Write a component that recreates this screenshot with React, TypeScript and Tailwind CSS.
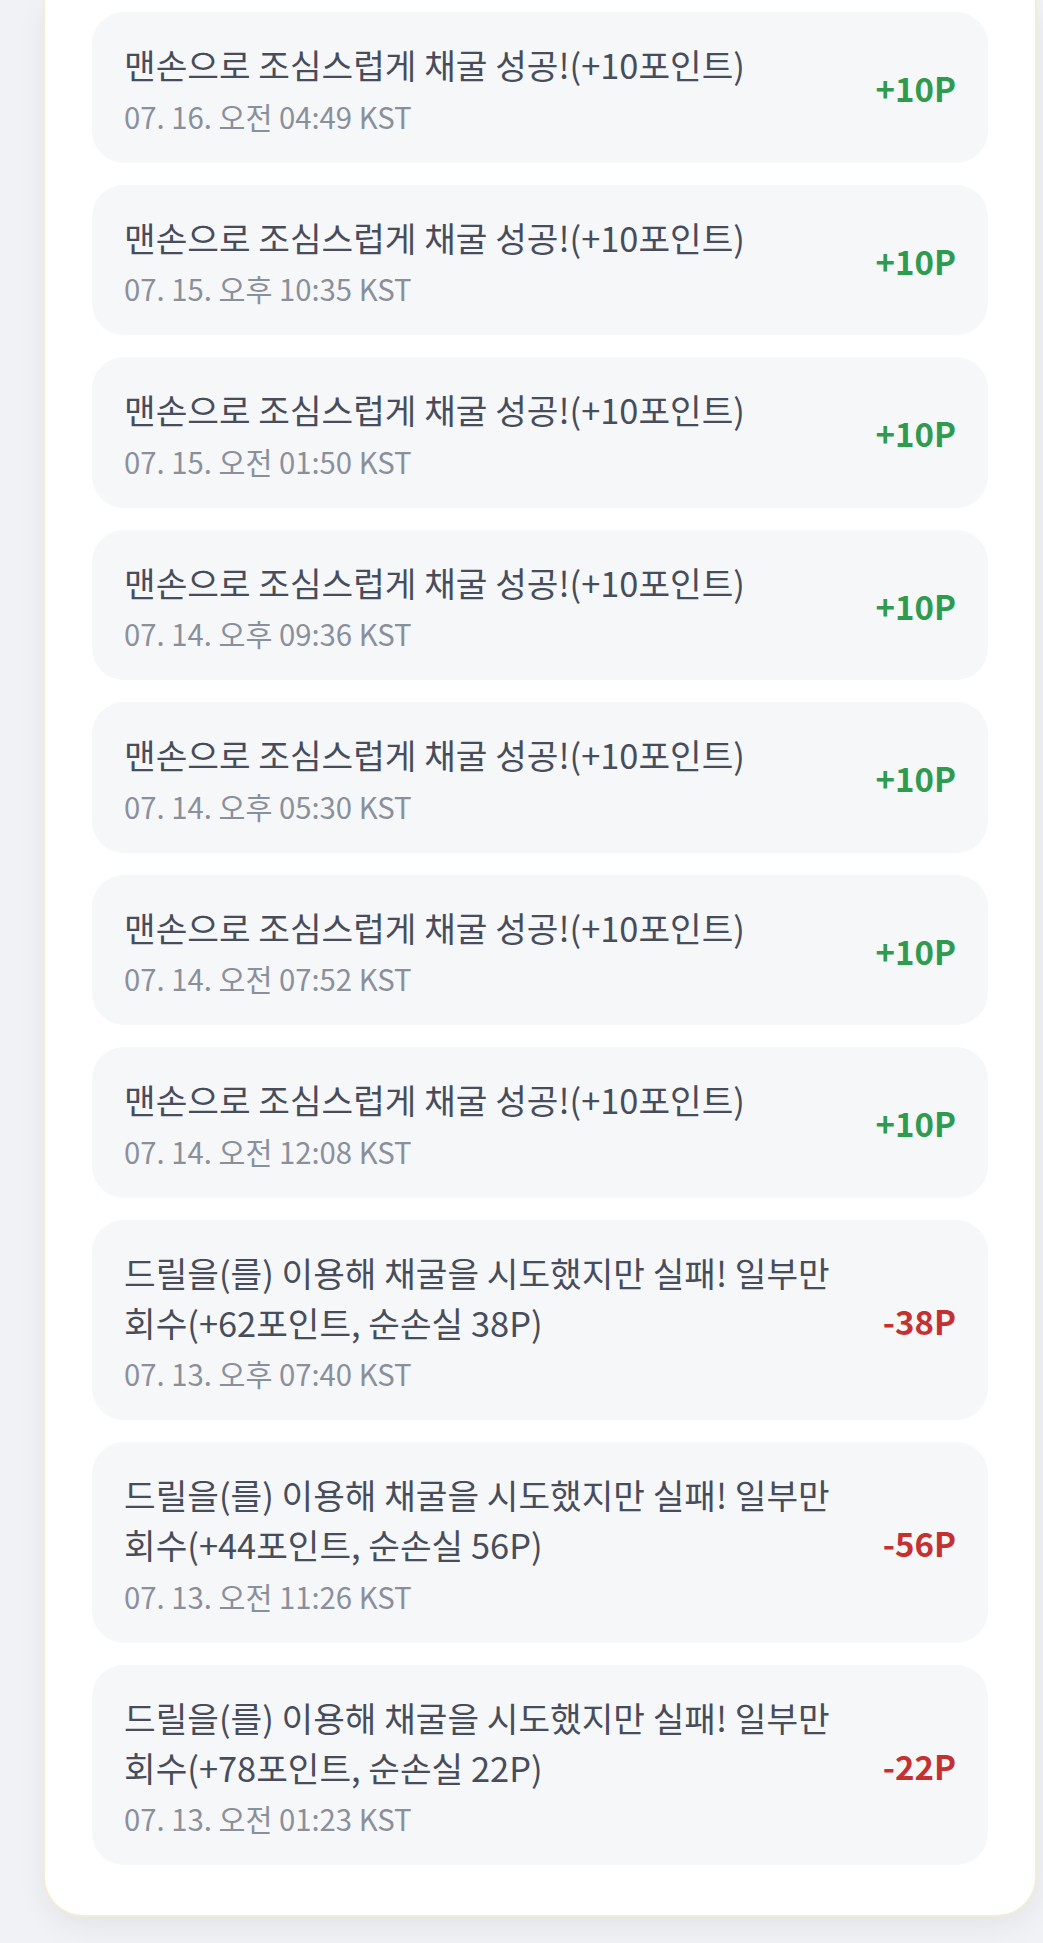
import React from "react";

type Item = { title: string; date: string; amount: string; positive: boolean };

const items: Item[] = [
  { title: "맨손으로 조심스럽게 채굴 성공!(+10포인트)", date: "07. 16. 오전 04:49 KST", amount: "+10P", positive: true },
  { title: "맨손으로 조심스럽게 채굴 성공!(+10포인트)", date: "07. 15. 오후 10:35 KST", amount: "+10P", positive: true },
  { title: "맨손으로 조심스럽게 채굴 성공!(+10포인트)", date: "07. 15. 오전 01:50 KST", amount: "+10P", positive: true },
  { title: "맨손으로 조심스럽게 채굴 성공!(+10포인트)", date: "07. 14. 오후 09:36 KST", amount: "+10P", positive: true },
  { title: "맨손으로 조심스럽게 채굴 성공!(+10포인트)", date: "07. 14. 오후 05:30 KST", amount: "+10P", positive: true },
  { title: "맨손으로 조심스럽게 채굴 성공!(+10포인트)", date: "07. 14. 오전 07:52 KST", amount: "+10P", positive: true },
  { title: "맨손으로 조심스럽게 채굴 성공!(+10포인트)", date: "07. 14. 오전 12:08 KST", amount: "+10P", positive: true },
  { title: "드릴을(를) 이용해 채굴을 시도했지만 실패! 일부만 회수(+62포인트, 순손실 38P)", date: "07. 13. 오후 07:40 KST", amount: "-38P", positive: false },
  { title: "드릴을(를) 이용해 채굴을 시도했지만 실패! 일부만 회수(+44포인트, 순손실 56P)", date: "07. 13. 오전 11:26 KST", amount: "-56P", positive: false },
  { title: "드릴을(를) 이용해 채굴을 시도했지만 실패! 일부만 회수(+78포인트, 순손실 22P)", date: "07. 13. 오전 01:23 KST", amount: "-22P", positive: false },
];

export default function App() {
  return (
    <div
      className="min-h-[1943px] w-[1043px] bg-[#f0f2f5] pl-[43px]"
      style={{ fontFamily: '"Noto Sans CJK KR", "Noto Sans", sans-serif' }}
    >
      <div className="w-[994px] rounded-b-[40px] border-x-2 border-b-2 border-[#f3ecd8] bg-white px-[47px] pt-[12px] pb-[50px] shadow-[0_10px_30px_rgba(0,0,0,0.06)]">
        <div className="flex flex-col gap-[22px]">
          {items.map((it, i) => (
            <div
              key={i}
              className="flex items-center justify-between rounded-[32px] bg-[#f6f7f9] pl-[32px] pr-[32px] pt-[27px] pb-[27px]"
            >
              <div className="min-w-0 flex-1 break-keep">
                <div className="text-[34.4px] leading-[50px] text-[#474d5a]">{it.title}</div>
                <div className="mt-[6.5px] text-[29.3px] leading-[40px] text-[#8a909b]">{it.date}</div>
              </div>
              <div
                className={
                  "ml-[40px] pt-[3px] text-[33px] font-bold " +
                  (it.positive ? "text-[#2f9b4f]" : "text-[#c53030]")
                }
              >
                {it.amount}
              </div>
            </div>
          ))}
        </div>
      </div>
    </div>
  );
}
